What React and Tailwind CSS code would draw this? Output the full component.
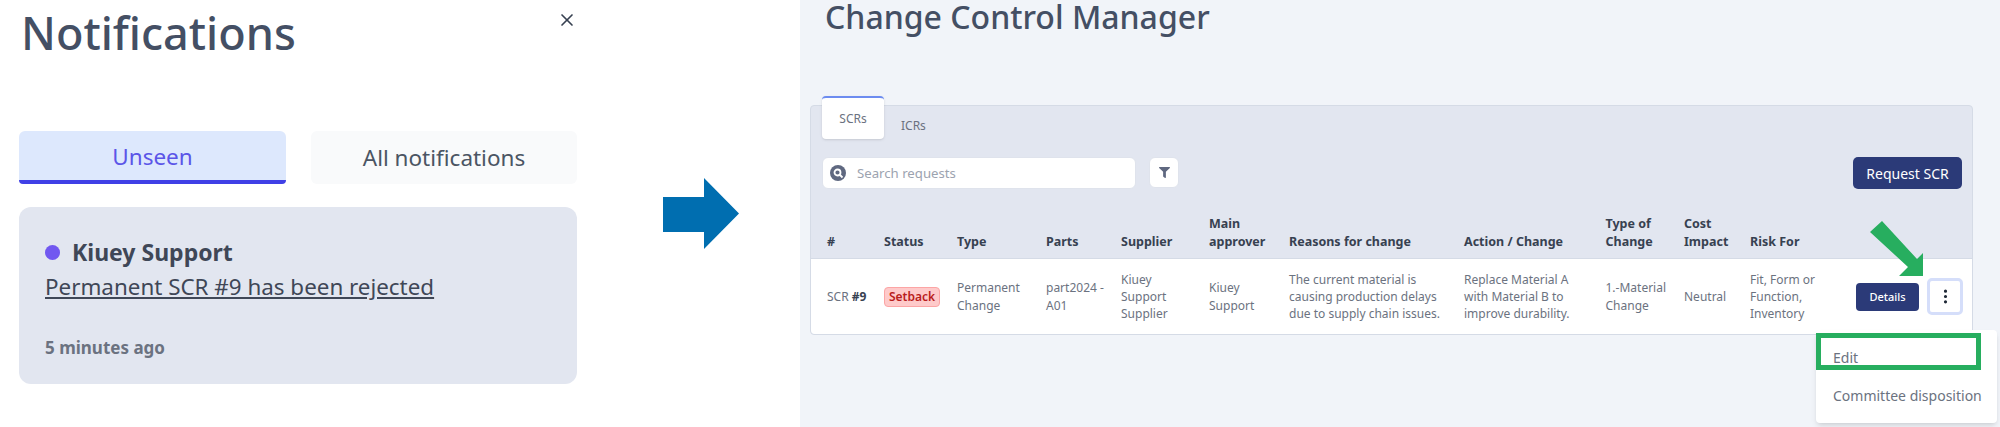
import React from 'react';
import { X } from 'lucide-react';
import { FaFilter } from 'react-icons/fa';
import { BsThreeDotsVertical } from 'react-icons/bs';

const columns = 'grid grid-cols-[57px_73px_89px_75px_88px_80px_175px_141.5px_78.5px_66px_106px_1fr]';

const headers = ['#', 'Status', 'Type', 'Parts', 'Supplier', 'Main approver', 'Reasons for change', 'Action / Change', 'Type of Change', 'Cost Impact', 'Risk For'];

const Notifications = () => (
  <div className="flex h-[427px] w-[800px] bg-white pl-[19px]">
    <div className="w-[558px]">
      <div className="flex h-[131px] items-start justify-between">
        <h1 className="pl-[2px] pt-[4px] text-[45px] leading-[58px] font-medium text-[#444f64]">Notifications</h1>
        <X className="mt-[10px] h-[20px] w-[20px] text-[#374151]" strokeWidth={2} />
      </div>
      <div className="flex gap-[25px]">
        <div className="flex h-[53px] w-[267px] items-center justify-center rounded-t-[6px] rounded-b-[4px] border-b-4 border-[#4040e6] bg-[#dde8fd] pt-[3px] text-[22.5px] text-[#5b55e8]">Unseen</div>
        <div className="flex h-[53px] w-[266px] items-center justify-center rounded-[6px] bg-[#f9fafb] pt-[1px] text-[22.5px] text-[#4b5563]">All notifications</div>
      </div>
      <div className="mt-[23px] h-[177px] rounded-[12px] bg-[#e2e6f0] pl-[26px] pt-[28px]">
        <div className="flex items-center gap-[12px]">
          <span className="h-[15px] w-[15px] rounded-full bg-[#7158f0]" />
          <span className="text-[23px] leading-[34px] font-bold text-[#3f4757]">Kiuey Support</span>
        </div>
        <div className="text-[22.4px] leading-[36px] text-[#3f4757] underline">Permanent SCR #9 has been rejected</div>
        <div className="mt-[31px] text-[17px] leading-[24px] font-bold text-[#6b7280]">5 minutes ago</div>
      </div>
    </div>
    <svg className="ml-[86px] mt-[178px] h-[71px] w-[76px]" viewBox="0 0 76 71">
      <path d="M0 19H41V0L76 35.5L41 71V54H0Z" fill="#006eb0" />
    </svg>
  </div>
);

const SearchBar = () => (
  <div className="flex h-[52px] items-start justify-between pl-[11px] pr-[10px] pt-[18px]">
    <div className="flex gap-[13px]">
      <div className="flex h-[32px] w-[314px] items-center gap-[11px] rounded-[6px] border border-[#dfe3ec] bg-white pl-[7px]">
        <svg className="h-[16px] w-[16px]" viewBox="0 0 16 16">
          <circle cx="8" cy="8" r="8" fill="#5f6880" />
          <circle cx="7.5" cy="7.5" r="3" fill="none" stroke="#fff" strokeWidth="1.8" />
          <path d="M10 10l2.5 2.5" stroke="#fff" strokeWidth="1.8" />
        </svg>
        <span className="pt-[1px] text-[13.2px] text-[#9ca3af]">Search requests</span>
      </div>
      <div className="flex h-[31px] w-[30px] items-center justify-center rounded-[6px] border border-[#dfe3ec] bg-white">
        <FaFilter className="h-[11px] w-[11px] text-[#5f6880]" />
      </div>
    </div>
    <div className="flex h-[32px] w-[109px] items-center justify-center rounded-[5px] bg-[#2b3a78] text-[14px] text-white">Request SCR</div>
  </div>
);

const ControlManager = () => (
  <div className="h-[427px] flex-1 bg-[#f1f4f9] pl-[10px] pr-[27px]">
    <h1 className="h-[105px] pl-[15px] text-[32px] leading-[34px] font-medium text-[#444f64]">Change Control Manager</h1>
    <div className="relative h-[230px] rounded-[4px] border border-[#d5dbe6] bg-[#e2e6f0]">
      <div className="-mt-[10px] flex">
        <div className="ml-[11px] flex h-[43px] w-[62px] items-center justify-center rounded-[4px] border-t-2 border-[#6d8cf0] bg-white text-[12px] text-[#6b7280] shadow-sm">SCRs</div>
        <div className="ml-[17px] mt-[21px] text-[12px] leading-[18px] text-[#6b7280]">ICRs</div>
      </div>
      <SearchBar />
      <div className={`${columns} h-[67px] items-end pb-[8px] pl-[16px] text-[12.5px] leading-[17.5px] font-bold text-[#374151]`}>
        {headers.map((label) => (
          <div key={label} className={label.length < 15 && label.includes(' ') ? 'pr-[20px]' : ''}>{label}</div>
        ))}
      </div>
      <div className={`${columns} h-[76px] items-center rounded-b-[4px] border-t border-[#d5dbe6] bg-white pl-[16px] text-[12px] leading-[17.3px] text-[#6b7280]`}>
        <div>SCR <span className="font-bold text-[#374151]">#9</span></div>
        <div><span className="inline-block h-[20px] w-[56px] rounded-[4px] border border-[#fca5a5] bg-[#fecaca] text-center leading-[18px] font-semibold text-[#b91c1c]">Setback</span></div>
        <div className="pr-[20px]">Permanent Change</div>
        <div className="pr-[10px]">part2024 - A01</div>
        <div className="pr-[30px]">Kiuey Support Supplier</div>
        <div className="pr-[30px]">Kiuey Support</div>
        <div className="pr-[10px]">The current material is causing production delays due to supply chain issues.</div>
        <div className="pr-[25px]">Replace Material A with Material B to improve durability.</div>
        <div>1.-Material Change</div>
        <div>Neutral</div>
        <div className="pr-[20px]">Fit, Form or Function, Inventory</div>
        <div className="flex items-center gap-[8px]">
          <div className="flex h-[28px] w-[63px] items-center justify-center rounded-[4px] bg-[#2b3a78] text-[11px] font-medium text-white">Details</div>
          <div className="flex h-[37px] w-[36px] items-center justify-center rounded-[5px] border-[3px] border-[#d5defa] bg-white">
            <BsThreeDotsVertical className="h-[17px] w-[17px] text-[#1f2937]" />
          </div>
        </div>
      </div>
      <svg className="absolute left-[1059px] top-[115px] h-[56px] w-[56px]" viewBox="0 0 56 56">
        <path d="M0 11L12 0L47 38L53 32L53 55L29 55L38 46Z" fill="#27ae5f" />
      </svg>
      <div className="absolute left-[1005px] top-[224px] h-[93px] w-[181px] rounded-[4px] bg-white text-[14px] text-[#6b7280] shadow-md">
        <div className="absolute left-0 top-[3px] h-[37px] w-[165px] border-[5px] border-[#27ae5f]" />
        <div className="pl-[17px] pt-[18px] leading-[20px]">Edit</div>
        <div className="pl-[17px] pt-[18px] leading-[20px] whitespace-nowrap">Committee disposition</div>
      </div>
    </div>
  </div>
);

const App = () => (
  <div className="flex h-[427px] w-[2000px] overflow-hidden font-['Noto_Sans',sans-serif]">
    <Notifications />
    <ControlManager />
  </div>
);

export default App;
